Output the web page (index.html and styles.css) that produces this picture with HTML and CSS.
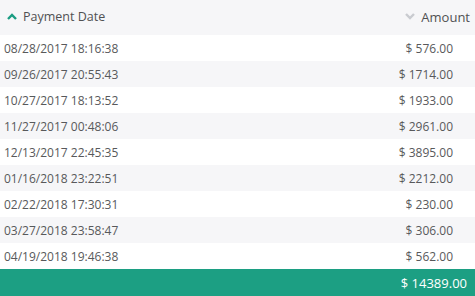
FILE: index.html
```html
<!DOCTYPE html>
<html>
<head>
<meta charset="utf-8">
<link rel="stylesheet" href="styles.css">
</head>
<body>
<div class="table">
  <div class="head">
    <div class="th th-date">
      <svg class="chev" width="10" height="7" viewBox="0 0 10 7"><path d="M1 6 L5 2 L9 6" fill="none" stroke="#1a9c82" stroke-width="2.4"/></svg>
      <span>Payment Date</span>
    </div>
    <div class="th th-amt">
      <svg class="chev" width="10" height="7" viewBox="0 0 10 7"><path d="M1 1 L5 5 L9 1" fill="none" stroke="#c9cbd0" stroke-width="2.4"/></svg>
      <span>Amount</span>
    </div>
  </div>
  <div class="row"><span>08/28/2017 18:16:38</span><span class="amt">$ 576.00</span></div>
  <div class="row"><span>09/26/2017 20:55:43</span><span class="amt">$ 1714.00</span></div>
  <div class="row"><span>10/27/2017 18:13:52</span><span class="amt">$ 1933.00</span></div>
  <div class="row"><span>11/27/2017 00:48:06</span><span class="amt">$ 2961.00</span></div>
  <div class="row"><span>12/13/2017 22:45:35</span><span class="amt">$ 3895.00</span></div>
  <div class="row"><span>01/16/2018 23:22:51</span><span class="amt">$ 2212.00</span></div>
  <div class="row"><span>02/22/2018 17:30:31</span><span class="amt">$ 230.00</span></div>
  <div class="row"><span>03/27/2018 23:58:47</span><span class="amt">$ 306.00</span></div>
  <div class="row"><span>04/19/2018 19:46:38</span><span class="amt">$ 562.00</span></div>
  <div class="foot"><span class="total">$ 14389.00</span></div>
</div>
</body>
</html>
```
FILE: styles.css
```css
html, body {
  margin: 0;
  padding: 0;
  background: #ffffff;
}
body {
  font-family: "Open Sans", "Segoe UI", sans-serif;
  color: #58595b;
  width: 475px;
  height: 296px;
  overflow: hidden;
}
.table {
  display: flex;
  flex-direction: column;
}
.head {
  height: 33px;
  padding-bottom: 2px;
  background: #f6f6f8;
  display: flex;
  justify-content: space-between;
  align-items: center;
  font-size: 13px;
  color: #505153;
}
.th {
  display: flex;
  align-items: center;
  gap: 6px;
}
.th-date { padding-left: 7px; }
.th-amt { padding-right: 5px; }
.th-date span { font-size: 12.5px; }
.chev { display: block; }
.row {
  height: 26px;
  display: flex;
  justify-content: space-between;
  align-items: center;
  font-size: 12px;
  padding: 0 22px 0 4px;
}
.row:nth-child(odd) {
  background: #f6f6f8;
}
.foot {
  height: 27px;
  background: #1c9f83;
  color: #ffffff;
  display: flex;
  justify-content: flex-end;
  align-items: center;
  padding-right: 8px;
  font-size: 13px;
}
```
